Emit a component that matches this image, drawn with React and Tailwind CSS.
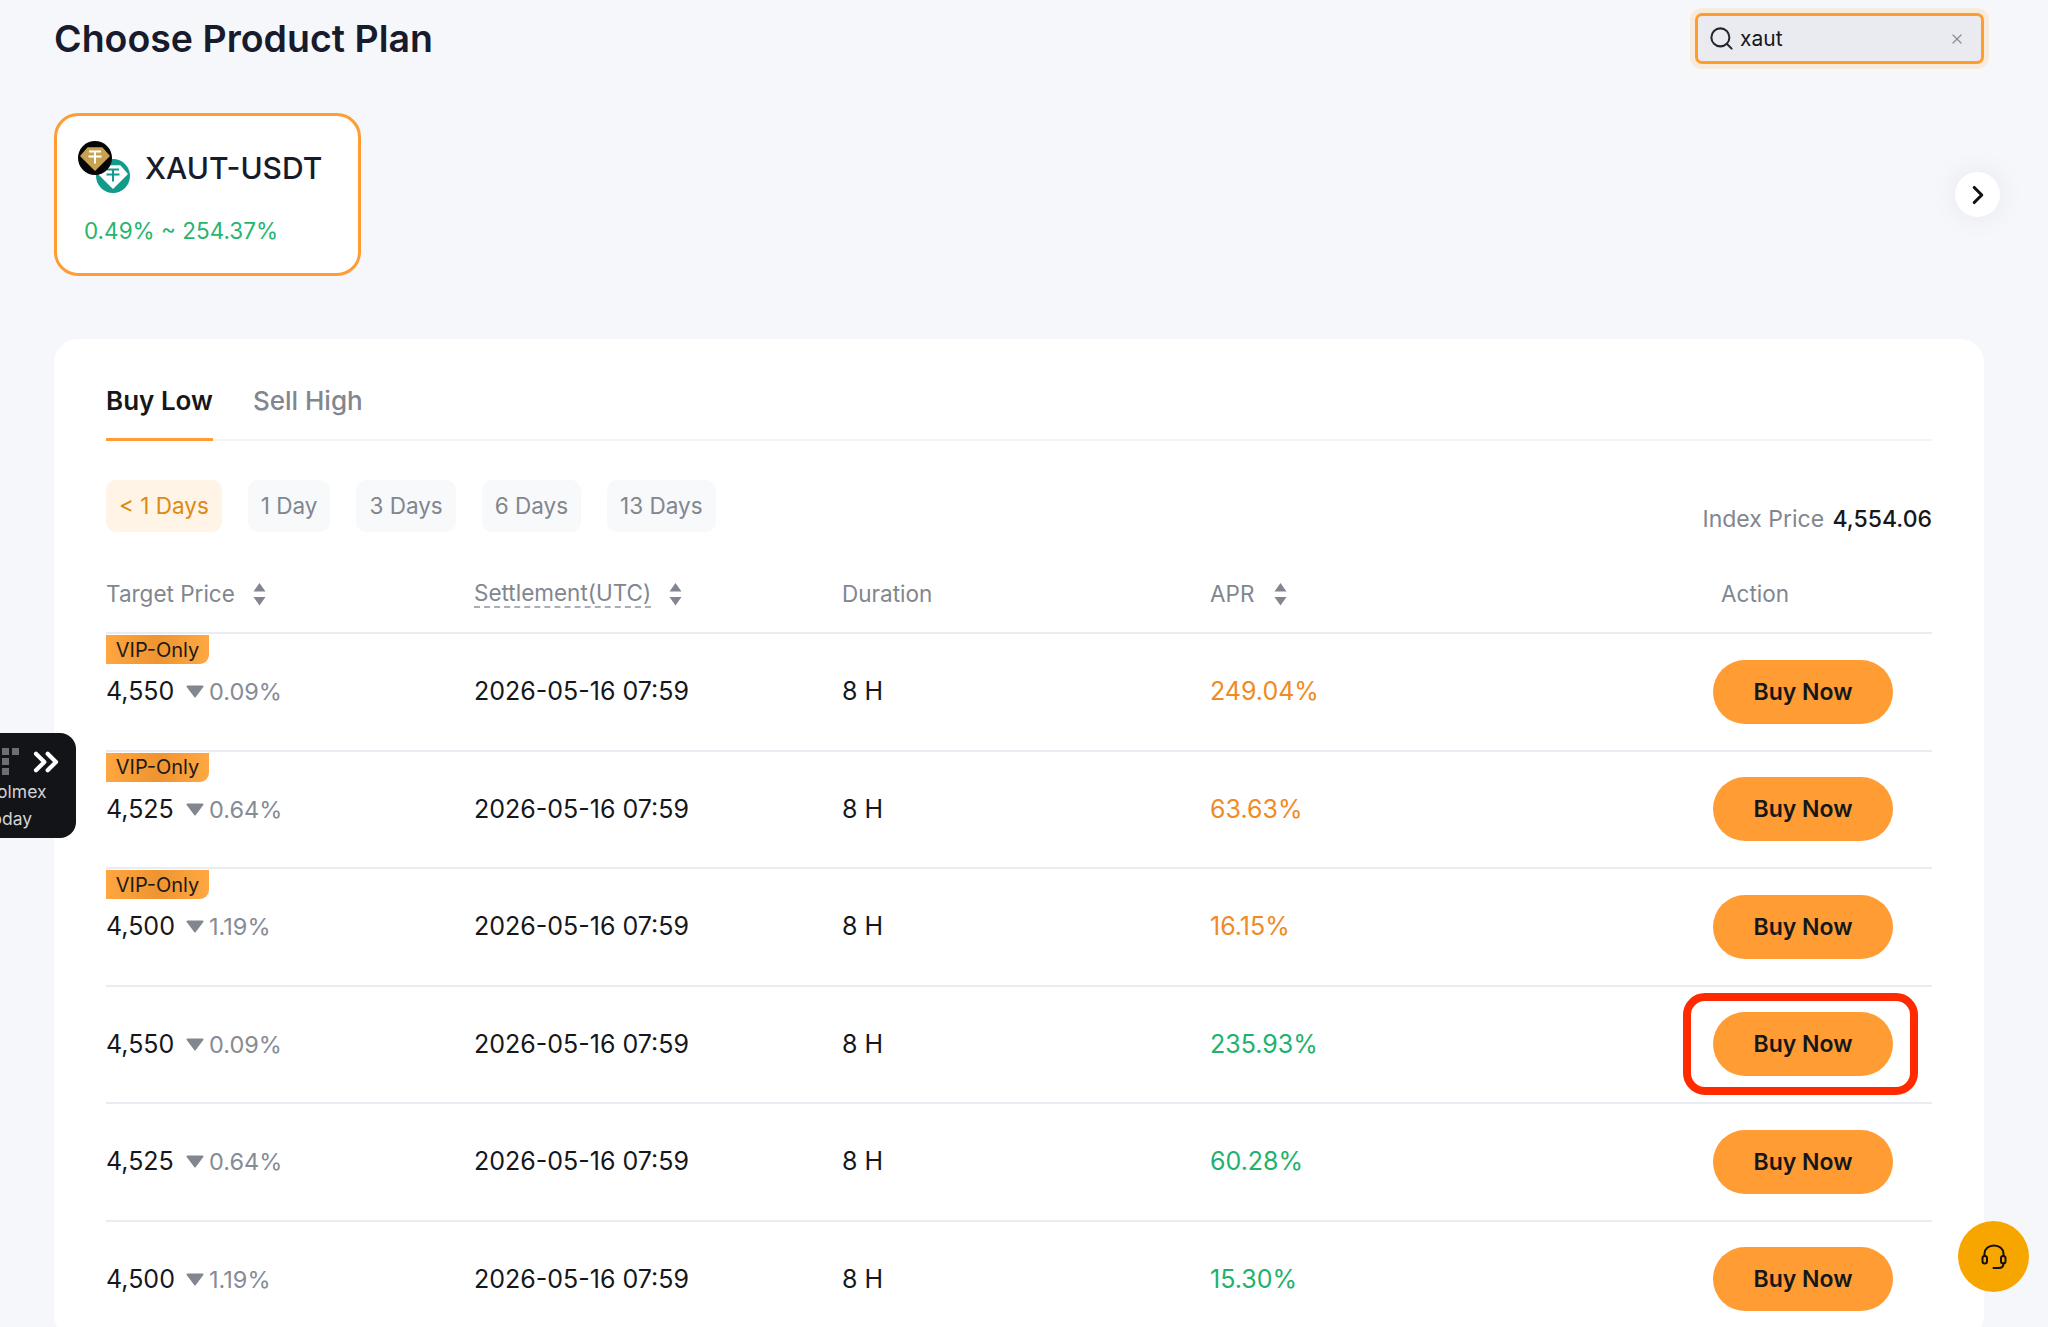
import { ChevronRight, ChevronsRight, Search, X } from 'lucide-react';

const durations = ['< 1 Days', '1 Day', '3 Days', '6 Days', '13 Days'];

const rows = [
  { price: '4,550', diff: '0.09%', apr: '249.04%', vip: true },
  { price: '4,525', diff: '0.64%', apr: '63.63%', vip: true },
  { price: '4,500', diff: '1.19%', apr: '16.15%', vip: true },
  { price: '4,550', diff: '0.09%', apr: '235.93%', marked: true },
  { price: '4,525', diff: '0.64%', apr: '60.28%' },
  { price: '4,500', diff: '1.19%', apr: '15.30%' },
];

const Gem = ({ cx, cy, ring, gem, mark }) => (
  <g>
    <circle cx={cx} cy={cy} r="17" fill={ring} />
    <path
      d={`M${cx - 7} ${cy - 10}h14l7 8-14 14-14-14z`}
      fill={gem}
      stroke={gem}
      strokeWidth="1.5"
      strokeLinejoin="round"
    />
    <path
      d={`M${cx - 6} ${cy - 6.5}h12M${cx} ${cy - 6.5}v12M${cx - 6.5} ${cy - 1.5}h13`}
      stroke={mark}
      strokeWidth="2"
      fill="none"
    />
  </g>
);

const SortIcon = () => (
  <svg width="13" height="24" viewBox="0 0 13 24" className="shrink-0" fill="#81868f">
    <path d="M6.5 1 12.5 9.500H.5z" />
    <path d="M.5 15h12l-6 8.500z" />
  </svg>
);

const DownMark = () => (
  <svg width="18" height="13" viewBox="0 0 18 13" fill="#81868f">
    <path d="M1.500.5h15a1 1 0 0 1 .8 1.600L9.800 12a1 1 0 0 1-1.600 0L.7 2.100A1 1 0 0 1 1.500.5z" />
  </svg>
);

const HeadsetIcon = () => (
  <svg width="26" height="26" viewBox="0 0 26 26" fill="none" stroke="#111" strokeWidth="2" strokeLinecap="round">
    <path d="M3.500 12V9.500a9.500 8 0 0 1 19 0V12" />
    <rect x="1.500" y="12" width="4.500" height="7.500" rx="2.250" />
    <rect x="20" y="12" width="4.500" height="7.500" rx="2.250" />
    <path d="M22.500 19.500c0 3-2 4.500-5 4.500h-5" />
  </svg>
);

const Row = ({ row }) => (
  <div className="relative flex h-[117.5px] items-center border-b-2 border-[#e9edf3] text-[25px] text-[#16171b]">
    {row.vip && (
      <span className="absolute left-0 top-[1px] flex h-[29px] w-[103px] items-center justify-center rounded-br-[9px] bg-gradient-to-r from-[#ffa640] via-[#ee9430] to-[#ffa843] text-[20px] leading-none text-[#1c1a16]">
        VIP-Only
      </span>
    )}
    <div className="flex w-[368px] items-center">
      <span className="w-[80px]">{row.price}</span>
      <DownMark />
      <span className="ml-[5px] text-[23.500px] text-[#868b96]">{row.diff}</span>
    </div>
    <div className="w-[368px]">2026-05-16 07:59</div>
    <div className="w-[368px]">8 H</div>
    <div className={`flex-1 ${row.vip ? 'text-[#f08a24]' : 'text-[#20b26c]'}`}>{row.apr}</div>
    <div className="relative mr-[39px]">
      <button className="block h-[64px] w-[180px] rounded-full bg-[#ff9c33] text-[23px] font-semibold text-[#16171b]">
        Buy Now
      </button>
      {row.marked && (
        <span className="absolute -bottom-[19px] -left-[30px] -right-[25px] -top-[19px] rounded-[22px] border-[8px] border-[#ff2a00]" />
      )}
    </div>
  </div>
);

export default function App() {
  return (
    <div className="relative h-[1327px] overflow-hidden bg-[#f5f7fb] font-[Inter,sans-serif]">
      <div className="pl-[54px] pr-[64px] pt-[13px]">
        <div className="flex h-[51px] items-center justify-between">
          <h1 className="text-[37.500px] font-semibold leading-none text-[#171b2b]">Choose Product Plan</h1>
          <div className="flex h-[51px] w-[289px] items-center rounded-[7px] border-[3px] border-[#ff9c2e] bg-[#e9ebf1] pl-[10px] pr-[16px] shadow-[0_0_0_5px_#f7ecdc]">
            <Search size={27} strokeWidth={1.8} className="text-[#24262b]" />
            <span className="ml-[5px] flex-1 text-[21px] text-[#16171b]">xaut</span>
            <X size={16} strokeWidth={1.800} className="text-[#8b8e96]" />
          </div>
        </div>
      </div>

      <div className="mt-[49px] flex items-center justify-between pl-[54px] pr-[48px]">
        <div className="h-[163px] w-[307px] rounded-[24px] border-[3px] border-[#ff9c33] bg-white pl-[27px] pt-[25px]">
          <div className="flex items-center">
            <svg width="54" height="54" viewBox="0 0 54 54" className="-ml-[6px] shrink-0">
              <Gem cx={35} cy={35} ring="#129a8b" gem="#ffffff" mark="#129a8b" />
              <Gem cx={17} cy={17} ring="#050505" gem="#c9a24f" mark="#ffffff" />
            </svg>
            <span className="ml-[13px] text-[30px] font-medium leading-none text-[#171b2b]">XAUT-USDT</span>
          </div>
          <div className="mt-[25px] text-[22.500px] leading-none text-[#26b56f]">0.49% ~ 254.37%</div>
        </div>
        <button className="flex h-[45px] w-[45px] items-center justify-center rounded-full bg-white shadow-[0_0_30px_rgba(20,30,60,0.07)]">
          <ChevronRight size={30} strokeWidth={2.500} className="text-[#111]" />
        </button>
      </div>

      <div className="ml-[54px] mr-[64px] mt-[63px] rounded-[24px] bg-white px-[52px] pt-[44px]">
        <div className="flex gap-[40px] border-b-2 border-[#f2f3f5]">
          <button className="-mb-[2px] border-b-[3px] border-[#ff9c33] pb-[19px] text-[26px] font-semibold leading-[36px] text-[#16171b]">
            Buy Low
          </button>
          <button className="-mb-[2px] pb-[22px] text-[26px] font-medium leading-[36px] text-[#81868f]">Sell High</button>
        </div>

        <div className="mt-[39px] flex items-end justify-between">
          <div className="flex gap-[26px]">
            {durations.map((item, index) => (
              <button
                key={item}
                className={`h-[52px] rounded-[10px] px-[13px] text-[22.500px] ${
                  index === 0 ? 'bg-[#fff4e5] text-[#dd8a12]' : 'bg-[#f8f9fb] text-[#81868f]'
                }`}
              >
                {item}
              </button>
            ))}
          </div>
          <div className="text-[23px] leading-[26px] text-[#81868f]">
            Index Price <span className="ml-[2px] font-medium text-[#16171b]">4,554.06</span>
          </div>
        </div>

        <div className="flex h-[102px] items-center border-b-2 border-[#e9edf3] pt-[24px] text-[22.500px] text-[#81868f]">
          <div className="flex w-[368px] items-center gap-[18px]">
            Target Price <SortIcon />
          </div>
          <div className="flex w-[368px] items-center gap-[18px]">
            <span className="border-b-2 border-dashed border-[#a9adb5] leading-[26px]">Settlement(UTC)</span>
            <SortIcon />
          </div>
          <div className="w-[368px]">Duration</div>
          <div className="flex flex-1 items-center gap-[20px]">
            APR <SortIcon />
          </div>
          <div className="mr-[39px] w-[172px]">Action</div>
        </div>

        {rows.map((row, index) => (
          <Row key={index} row={row} />
        ))}
      </div>

      <div className="absolute left-[-40px] top-[733px] h-[105px] w-[116px] overflow-hidden rounded-[16px] bg-[#131418] pl-[26px] text-[17.500px] leading-[27px] text-[#d2d3d6]">
        <div className="absolute left-[42px] top-[15px] grid grid-cols-2 gap-[3px]">
          <span className="h-[7px] w-[7px] bg-[#6d6e72]" />
          <span className="h-[7px] w-[7px] bg-[#6d6e72]" />
          <span className="h-[7px] w-[7px] bg-[#6d6e72]" />
          <span />
          <span className="h-[7px] w-[7px] bg-[#6d6e72]" />
        </div>
        <ChevronsRight size={40} strokeWidth={2.500} className="absolute left-[66px] top-[9px] text-white" />
        <div className="pt-[45px]">Polmex</div>
        <div>today</div>
      </div>

      <button className="absolute left-[1958px] top-[1221px] flex h-[71px] w-[71px] items-center justify-center rounded-full bg-[#f7a600]">
        <HeadsetIcon />
      </button>
    </div>
  );
}
